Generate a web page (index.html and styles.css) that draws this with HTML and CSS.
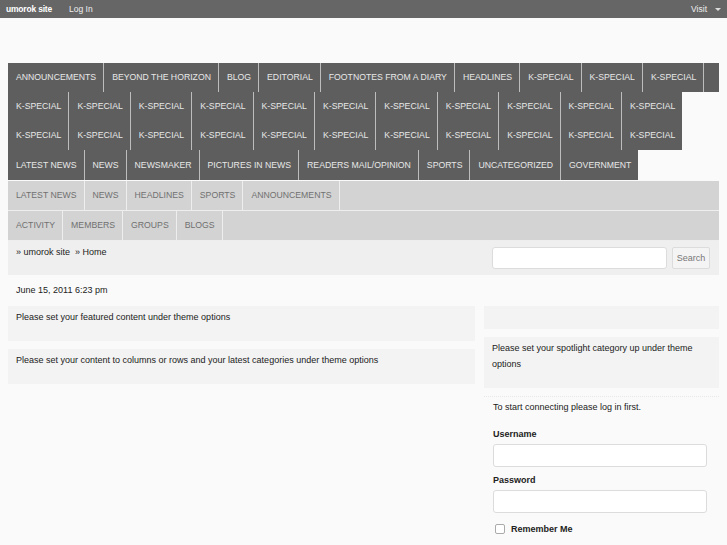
FILE: index.html
```html
<!DOCTYPE html>
<html>
<head>
<meta charset="utf-8">
<link rel="stylesheet" href="styles.css">
</head>
<body>
<div class="adminbar">
  <div class="ab-left"><span class="ab-site">umorok site</span><span class="ab-login">Log In</span></div>
  <div class="ab-right">Visit <span class="ab-arrow"></span></div>
</div>
<div class="page">
  <div class="header"></div>
  <nav class="catnav">
    <ul class="row">
      <li>ANNOUNCEMENTS</li><li>BEYOND THE HORIZON</li><li>BLOG</li><li>EDITORIAL</li><li>FOOTNOTES FROM A DIARY</li><li>HEADLINES</li><li>K-SPECIAL</li><li>K-SPECIAL</li><li>K-SPECIAL</li><li class="stub"></li>
    </ul>
    <ul class="row">
      <li>K-SPECIAL</li><li>K-SPECIAL</li><li>K-SPECIAL</li><li>K-SPECIAL</li><li>K-SPECIAL</li><li>K-SPECIAL</li><li>K-SPECIAL</li><li>K-SPECIAL</li><li>K-SPECIAL</li><li>K-SPECIAL</li><li>K-SPECIAL</li>
    </ul>
    <ul class="row">
      <li>K-SPECIAL</li><li>K-SPECIAL</li><li>K-SPECIAL</li><li>K-SPECIAL</li><li>K-SPECIAL</li><li>K-SPECIAL</li><li>K-SPECIAL</li><li>K-SPECIAL</li><li>K-SPECIAL</li><li>K-SPECIAL</li><li>K-SPECIAL</li>
    </ul>
    <ul class="row">
      <li>LATEST NEWS</li><li>NEWS</li><li>NEWSMAKER</li><li>PICTURES IN NEWS</li><li>READERS MAIL/OPINION</li><li>SPORTS</li><li>UNCATEGORIZED</li><li>GOVERNMENT</li>
    </ul>
  </nav>
  <nav class="pagenav">
    <ul class="row">
      <li>LATEST NEWS</li><li>NEWS</li><li>HEADLINES</li><li>SPORTS</li><li>ANNOUNCEMENTS</li>
    </ul>
    <ul class="row">
      <li>ACTIVITY</li><li>MEMBERS</li><li>GROUPS</li><li>BLOGS</li>
    </ul>
  </nav>
  <div class="crumbs">
    <div class="crumb-text">» umorok site &nbsp;» Home</div>
    <form class="search"><input class="search-input" type="text"><button class="search-btn" type="button">Search</button></form>
  </div>
  <div class="date">June 15, 2011 6:23 pm</div>
  <div class="columns">
    <div class="main">
      <div class="box">Please set your featured content under theme options</div>
      <div class="box">Please set your content to columns or rows and your latest categories under theme options</div>
    </div>
    <div class="side">
      <div class="box empty"></div>
      <div class="box spot">Please set your spotlight category up under theme options</div>
      <div class="login">
        <p class="login-intro">To start connecting please log in first.</p>
        <label class="lbl">Username</label>
        <input class="field" type="text">
        <label class="lbl">Password</label>
        <input class="field" type="password">
        <label class="remember"><span class="check"></span>Remember Me</label>
      </div>
    </div>
  </div>
</div>
</body>
</html>
```
FILE: styles.css
```css
* { box-sizing: border-box; }
html, body { margin: 0; padding: 0; }
body {
  background: #fafafa;
  font-family: "Liberation Sans", Arial, sans-serif;
  font-size: 9px;
  color: #333;
  width: 727px;
  height: 545px;
  overflow: hidden;
}
.adminbar {
  height: 18px;
  background: #666;
  display: flex;
  justify-content: space-between;
  align-items: center;
  color: #f2f2f2;
  font-size: 8.5px;
  padding: 0 6px 0 6px;
}
.ab-site { font-weight: bold; color: #fff; margin-right: 17px; letter-spacing: -0.2px; }
.ab-login { color: #eee; }
.ab-right { color: #eee; display: flex; align-items: center; }
.ab-arrow {
  display: inline-block;
  width: 0; height: 0;
  border-left: 3px solid transparent;
  border-right: 3px solid transparent;
  border-top: 3px solid #ddd;
  margin-left: 8px;
}
.page { padding: 0 8px; }
.header { height: 45px; }
ul.row {
  list-style: none;
  margin: 0;
  padding: 0;
  display: flex;
  height: 29px;
}
ul.row li {
  line-height: 29px;
  padding: 0 7px 0 8px;
  white-space: nowrap;
  text-transform: uppercase;
  font-size: 8.7px;
}
.catnav ul.row li {
  background: #5e5e5e;
  color: #e8e8e8;
  border-right: 1px solid #bdbdbd;
}
.catnav ul.row li.stub { flex: 1; padding: 0; border-right: 0; }
.catnav ul.row:nth-child(2) li:last-child,
.catnav ul.row:nth-child(3) li:last-child,
.catnav ul.row:nth-child(4) li:last-child { border-right: 0; }
.catnav ul.row:nth-child(4) { height: 30px; }
.catnav ul.row:nth-child(4) li { line-height: 30px; }
.pagenav { margin-top: 1px; }
.pagenav ul.row {
  background: #d3d3d3;
  border-bottom: 1px solid #eee;
  height: 30px;
}
.pagenav ul.row li {
  color: #707070;
  border-right: 1px solid #eee;
  line-height: 29px;
}
.crumbs {
  background: #efefef;
  height: 34px;
  display: flex;
  justify-content: space-between;
  align-items: flex-start;
  padding: 0 9px 0 8px;
}
.crumb-text { margin-top: 6px; color: #222; }
.search { display: flex; margin: 6px 0 0 0; }
.search-input {
  width: 175px;
  height: 22px;
  border: 1px solid #dcdcdc;
  border-radius: 3px;
  background: #fff;
  margin: 0 5px 0 0;
  padding: 0;
}
.search-btn {
  width: 38px;
  height: 22px;
  border: 1px solid #dcdcdc;
  border-radius: 2px;
  background: #f4f4f4;
  color: #777;
  font-family: "Liberation Sans", Arial, sans-serif;
  font-size: 9px;
  padding: 0;
}
.date { padding: 10px 8px 0 8px; height: 31px; color: #222; }
.columns { display: flex; gap: 9px; }
.main { width: 467px; }
.side { width: 235px; }
.box {
  background: #f3f3f3;
  padding: 6px 8px 0 8px;
  color: #222;
  line-height: 11px;
}
.main .box { height: 35px; margin-bottom: 8px; }
.side .empty { height: 23px; margin-bottom: 8px; }
.side .spot { height: 51px; line-height: 16px; padding-top: 3px; padding-right: 20px; }
.login { border-top: 1px dotted #e8e8e8; margin-top: 8px; padding: 0 12px 0 9px; color: #222; }
.login-intro { margin: 5px 0 0 0; line-height: 11px; }
.lbl { display: block; font-weight: bold; margin-top: 16px; line-height: 11px; }
.login .lbl + .field { margin-top: 4px; }
.field {
  display: block;
  width: 214px;
  height: 23px;
  border: 1px solid #dcdcdc;
  border-radius: 3px;
  background: #fff;
  padding: 0;
}
.login .field + .lbl { margin-top: 8px; }
.remember { display: flex; align-items: center; font-weight: bold; margin-top: 11px; }
.check {
  display: inline-block;
  width: 10px; height: 10px;
  border: 1px solid #aaa;
  border-radius: 2px;
  background: #fff;
  margin: 0 6px 0 2px;
}
```
